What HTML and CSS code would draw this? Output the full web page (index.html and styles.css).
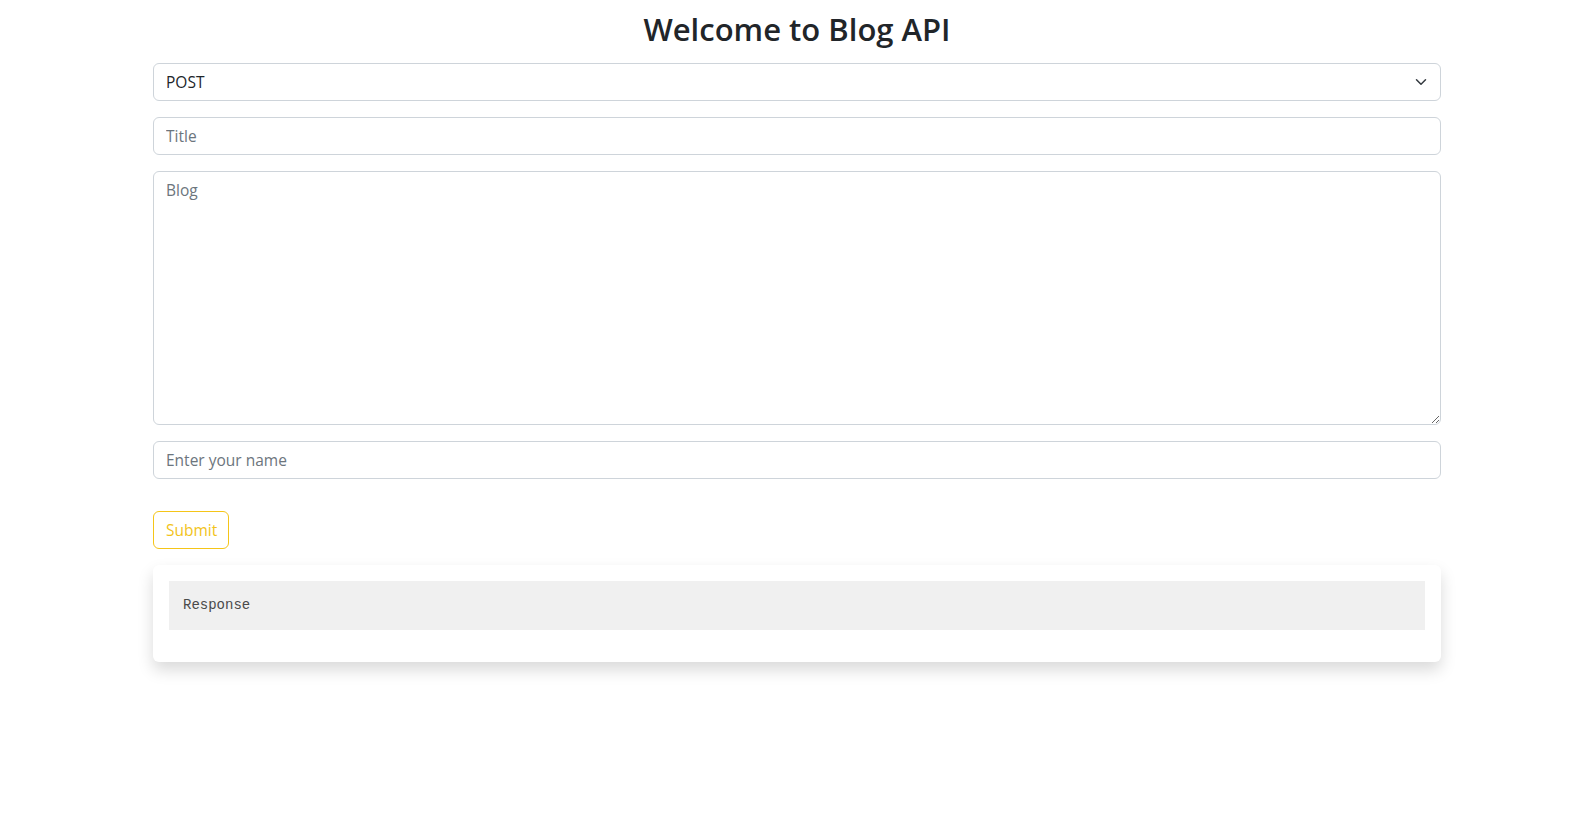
FILE: index.html
```html
<!DOCTYPE html>
<html lang="en">
<head>
<meta charset="utf-8">
<title>Blog API</title>
<link rel="stylesheet" href="styles.css">
</head>
<body>
<main class="page">
  <h2 class="heading">Welcome to Blog API</h2>
  <form class="blog-form">
    <div class="select-wrap">
      <select class="field select">
        <option>POST</option>
        <option>GET</option>
        <option>PUT</option>
        <option>DELETE</option>
      </select>
      <svg class="chevron" viewBox="0 0 16 16" width="16" height="12" aria-hidden="true"><path fill="none" stroke="#343a40" stroke-linecap="round" stroke-linejoin="round" stroke-width="2" d="m2 5 6 6 6-6"/></svg>
    </div>
    <input class="field" type="text" placeholder="Title">
    <textarea class="field area" placeholder="Blog"></textarea>
    <input class="field" type="text" placeholder="Enter your name">
    <button class="btn-submit" type="button">Submit</button>
  </form>
  <section class="card">
    <pre class="response">Response</pre>
  </section>
</main>
</body>
</html>
```
FILE: styles.css
```css
* { box-sizing: border-box; }
html, body { margin: 0; padding: 0; background: #fff; }
body {
  font-family: "Open Sans", "Noto Sans", sans-serif;
  font-size: 16px;
  line-height: 1.5;
  color: #212529;
  min-height: 829px;
}
.page {
  width: 1288px;
  margin-left: 153px;
  padding-top: 10px;
  padding-bottom: 40px;
}
.heading {
  margin: 0 0 15px;
  text-align: center;
  font-size: 31px;
  line-height: 38px;
  font-weight: 600;
  color: #212529;
}
.blog-form {
  display: flex;
  flex-direction: column;
  gap: 16px;
}
.field {
  display: block;
  width: 100%;
  height: 38px;
  padding: 6px 12px;
  font-family: inherit;
  font-size: 15.5px;
  line-height: 24px;
  color: #212529;
  background: #fff;
  border: 1px solid #ced4da;
  border-radius: 6px;
  outline: none;
}
.field::placeholder { color: #6c757d; opacity: 1; }
.select-wrap { position: relative; }
.select {
  appearance: none;
  -webkit-appearance: none;
  padding-right: 36px;
}
.chevron {
  position: absolute;
  right: 12px;
  top: 13px;
  pointer-events: none;
}
.area {
  height: 254px;
  resize: vertical;
}
.btn-submit {
  align-self: flex-start;
  margin-top: 16px;
  width: 76px;
  height: 38px;
  padding: 6px 12px;
  font-family: inherit;
  font-size: 15.5px;
  line-height: 24px;
  color: #f2c31a;
  background: transparent;
  border: 1px solid #f5c518;
  border-radius: 6px;
}
.card {
  margin-top: 16px;
  padding: 16px 16px 32px;
  background: #fff;
  border-radius: 6px;
  box-shadow: 0 8px 16px rgba(0, 0, 0, 0.15);
}
.response {
  margin: 0;
  padding: 14px;
  background: #f0f0f0;
  font-family: "Liberation Mono", "DejaVu Sans Mono", monospace;
  font-size: 14px;
  line-height: 21px;
  color: #4a4a4a;
}
```
